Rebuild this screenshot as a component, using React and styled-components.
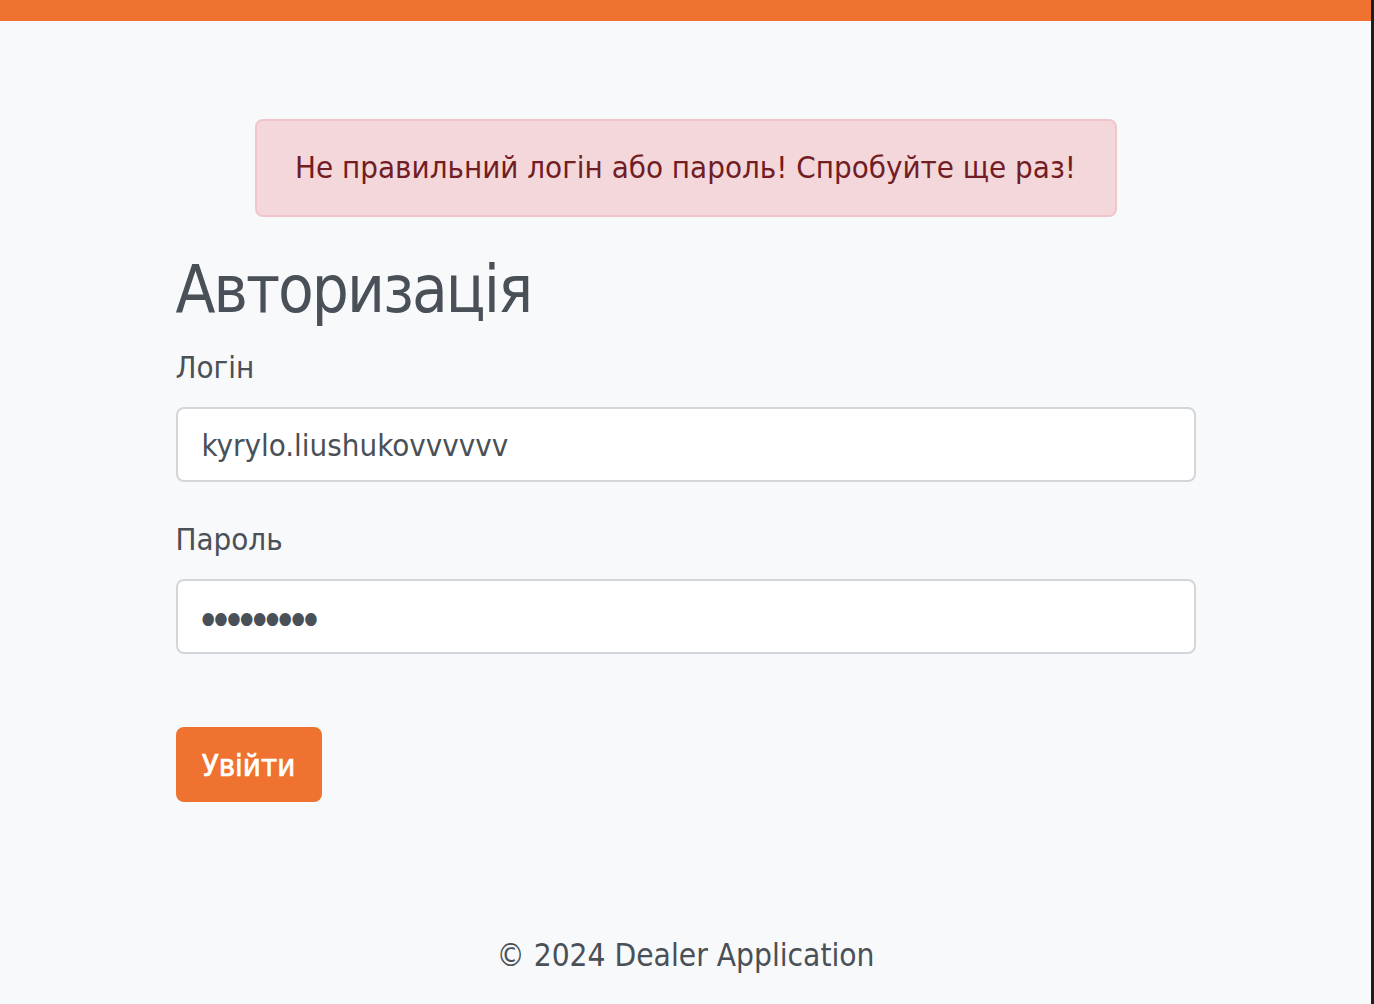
import React from 'react';
import styled, { createGlobalStyle } from 'styled-components';

const GlobalStyle = createGlobalStyle`
  html, body {
    margin: 0;
    padding: 0;
    background: #1e1e1e;
  }

  body {
    font-family: 'DejaVu Sans Condensed', 'DejaVu Sans', sans-serif;
    color: #495057;
  }

  * {
    box-sizing: border-box;
  }
`;

const Page = styled.div`
  display: flex;
  flex-direction: column;
  min-height: 100vh;
  background: #f8f9fa;
  margin-right: 3px;
`;

const TopBar = styled.div`
  height: 21px;
  background: #ef7230;
`;

const Main = styled.main`
  width: 1020px;
  margin: 0 auto;
  display: flex;
  flex-direction: column;
`;

const Alert = styled.div`
  align-self: center;
  width: 862px;
  height: 98px;
  margin-top: 98px;
  display: flex;
  align-items: center;
  justify-content: center;
  background: #f3d7da;
  border: 2px solid #efc6cb;
  border-radius: 8px;
  color: #721c24;
  font-size: 31px;
  line-height: 1.2;
`;

const Heading = styled.h1`
  margin: 34px 0 20px;
  font-size: 65px;
  font-weight: normal;
  letter-spacing: -2px;
  line-height: 1.2;
  color: #495057;
`;

const Form = styled.form`
  display: flex;
  flex-direction: column;
`;

const Label = styled.label`
  font-size: 31px;
  line-height: 1.2;
  margin-bottom: 21px;
`;

const Input = styled.input`
  height: 75px;
  width: 100%;
  padding: 0 24px;
  margin-bottom: 39px;
  background: #fff;
  border: 2px solid #d2d6db;
  border-radius: 8px;
  font-family: inherit;
  font-size: 31px;
  color: #495057;
  outline: none;
`;

const PasswordInput = styled(Input)`
  margin-bottom: 73px;
  padding: 7px 24px 0 19px;
  font-size: 44px;
  letter-spacing: -10.5px;
`;

const Button = styled.button`
  align-self: flex-start;
  width: 146px;
  height: 75px;
  border: none;
  border-radius: 8px;
  background: #ef7230;
  color: #fff;
  font-family: inherit;
  font-size: 31px;
  -webkit-text-stroke: 0.7px #fff;
  cursor: pointer;
`;

const Footer = styled.footer`
  margin-top: auto;
  padding-bottom: 29px;
  text-align: center;
  font-size: 31.4px;
  line-height: 1.2;
  color: #495057;
`;

const App = () => (
  <Page>
    <GlobalStyle />
    <TopBar />
    <Main>
      <Alert>Не правильний логін або пароль! Спробуйте ще раз!</Alert>
      <Heading>Авторизація</Heading>
      <Form onSubmit={e => e.preventDefault()}>
        <Label htmlFor='login'>Логін</Label>
        <Input id='login' type='text' defaultValue='kyrylo.liushukovvvvvv' />
        <Label htmlFor='password'>Пароль</Label>
        <PasswordInput id='password' type='password' defaultValue='123456789' />
        <Button type='submit'>Увійти</Button>
      </Form>
    </Main>
    <Footer>© 2024 Dealer Application</Footer>
  </Page>
);

export default App;
